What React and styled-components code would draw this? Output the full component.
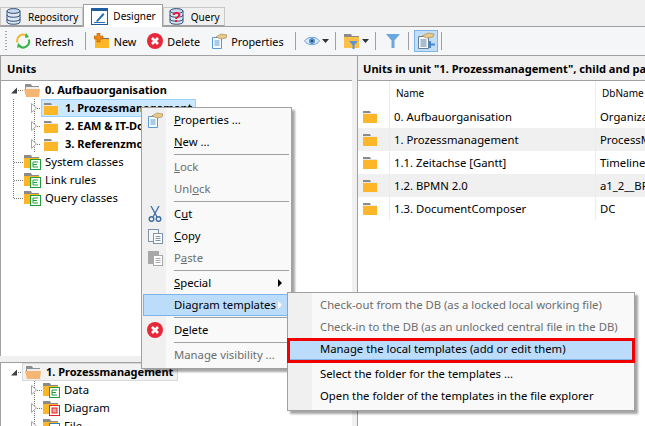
import { createGlobalStyle, styled } from "styled-components"

const GlobalStyle = createGlobalStyle`
  html, body {
    margin: 0;
    padding: 0;
    background: #f0f0f0;
  }
  * {
    box-sizing: border-box;
  }
  svg {
    flex-shrink: 0;
  }
`

const Closed = () => <>
  <path d="M0 2h7l1 2h6v2H0z" fill="#8a8a8a" />
  <rect x="0" y="5" width="14" height="9" fill="#fdb627" />
  <rect x="0" y="4" width="14" height="1" fill="#e8e8e8" />
</>

const FolderIcon = () => <svg width="15" height="15" viewBox="0 0 15 15"><Closed /></svg>

const OpenFolderIcon = () => <svg width="17" height="15" viewBox="0 0 17 15">
  <path d="M1 1h6l1 2h7v3H1z" fill="#8f8f8f" />
  <path d="M2 4h13v2H2z" fill="#eeeeee" />
  <path d="M0 6h16l-1 8H2z" fill="#f6b673" />
</svg>

const BadgeFolderIcon = ({ color = "#1f9d3a", kind = "list" }) => <svg width="17" height="16" viewBox="0 0 17 16">
  <path d="M0 1h7l1 2h7v2H0z" fill="#8a8a8a" />
  <rect x="0" y="4" width="15" height="10" fill="#fdb627" />
  <rect x="6.5" y="5.5" width="10" height="10" fill="#fff" stroke={color} />
  {kind === "list" && <path d="M9 8h5M9 10.5h4M9 13h5M9 8v5" stroke={color} fill="none" />}
  {kind === "box" && <rect x="9" y="8" width="5" height="5" fill="#f3a0a0" stroke={color} />}
</svg>

const OpenArrow = () => <svg width="7" height="7" viewBox="0 0 7 7"><path d="M6 0.5v6H0z" fill="#404040" /></svg>

const ClosedArrow = () => <svg width="6" height="10" viewBox="0 0 6 10"><path d="M0.5 0.5l5 4.5-5 4.5z" fill="#fff" stroke="#a6a6a6" /></svg>

const DbIcon = ({ mark }) => <svg width="15" height="17" viewBox="0 0 15 17">
  <path d="M1 3v11c0 3 13 3 13 0V3z" fill="#dfe8f2" stroke="#2f4f7a" />
  <ellipse cx="7.5" cy="3" rx="6.5" ry="2.4" fill="#c8d8ea" stroke="#2f4f7a" />
  <path d="M1 7c0 3 13 3 13 0M1 11c0 3 13 3 13 0" fill="none" stroke="#2f4f7a" />
  {mark && <text x="7.5" y="14" textAnchor="middle" fontFamily="Liberation Sans" fontWeight="700" fontSize="15" fill="#e3173e">?</text>}
</svg>

const DesignerIcon = () => <svg width="17" height="17" viewBox="0 0 17 17">
  <rect x="0.5" y="0.5" width="16" height="16" fill="#fff" stroke="#1f5f9e" />
  <rect x="1" y="1" width="15" height="2" fill="#1f5f9e" />
  <path d="M5 13L12 5l1.500 1.500-7 7.500z" fill="#1f6fb5" />
  <path d="M3 14.500h11" stroke="#1f6fb5" />
</svg>

const RefreshIcon = () => <svg width="16" height="16" viewBox="0 0 16 16">
  <path d="M2.500 9.500A6 6 0 0 1 12 3" fill="none" stroke="#f2b632" strokeWidth="2" />
  <path d="M13.800 6.500A6 6 0 0 1 4.200 13" fill="none" stroke="#38b24a" strokeWidth="2" />
  <path d="M11 0l3 4-4 1zM2 15l1-5 3.500 3z" fill="#38b24a" />
</svg>

const NewIcon = () => <svg width="16" height="16" viewBox="0 0 16 16">
  <path d="M1 3h6l1 2h7v2H1z" fill="#6f6f6f" />
  <rect x="1" y="6" width="14" height="9" fill="#fdb627" />
  <path d="M3 0h3v3h3v3H6v3H3V6H0V3h3z" fill="#ef8a17" stroke="#a64d00" strokeWidth="0.5" />
</svg>

const DeleteIcon = () => <svg width="16" height="16" viewBox="0 0 16 16">
  <circle cx="8" cy="8" r="8" fill="#e5283a" />
  <path d="M5 5l6 6M11 5l-6 6" stroke="#fff" strokeWidth="2.6" />
</svg>

const PropertiesIcon = ({ muted }) => <svg width="16" height="16" viewBox="0 0 16 16">
  <path d="M1.500 4.500h9v11h-9z" fill="#f5fafe" stroke={muted ? "#8aa4bb" : "#5b9bd5"} />
  <path d="M3.500 8h5M3.500 10h5M3.500 12h5" stroke={muted ? "#8aa4bb" : "#5b9bd5"} />
  <path d="M5 4l5-3 6 1-1 3-5 1z" fill="#e8c98a" stroke="#9c8350" strokeWidth="0.6" />
</svg>

const ActivePropertiesIcon = () => <svg width="18" height="18" viewBox="0 0 18 18">
  <path d="M1.500 4.500h10v12h-10z" fill="#f5fafe" stroke="#5f7f9c" />
  <path d="M3.500 8h6M3.500 10h6M3.500 12h6M3.500 14h6" stroke="#5f7f9c" />
  <path d="M5 4l6-3 6 1-1 3-6 1z" fill="#e8c98a" stroke="#9c8350" strokeWidth="0.6" />
  <path d="M13 9v7M13 12.500h5" stroke="#3f87cf" strokeWidth="2" />
</svg>

const EyeIcon = () => <svg width="16" height="12" viewBox="0 0 16 12">
  <path d="M0.500 6C4 1 12 1 15.500 6 12 11 4 11 0.500 6z" fill="#dbe9f8" stroke="#6ea4dc" />
  <circle cx="8" cy="6" r="3" fill="#5b94d3" />
  <circle cx="8" cy="6" r="1.300" fill="#24517f" />
</svg>

const FolderFilterIcon = () => <svg width="16" height="16" viewBox="0 0 16 16">
  <path d="M0 1h7l1 2h7v2H0z" fill="#8a8a8a" />
  <rect x="0" y="4" width="15" height="11" fill="#fdc04a" />
  <path d="M5 8h9l-3.500 4v4h-2v-4z" fill="#5b94d3" />
</svg>

const FunnelIcon = () => <svg width="14" height="14" viewBox="0 0 14 14"><path d="M0 0h14L8.500 6.500V14h-3V6.500z" fill="#6ba6de" /></svg>

const CaretDown = () => <svg width="7" height="4" viewBox="0 0 7 4"><path d="M0 0h7L3.500 4z" fill="#333" /></svg>

const ScissorsIcon = () => <svg width="14" height="16" viewBox="0 0 14 16">
  <path d="M3 0l6 11M11 0L5 11" stroke="#3c6ea5" strokeWidth="1.300" fill="none" />
  <circle cx="3.500" cy="13" r="2.300" fill="none" stroke="#3c6ea5" strokeWidth="1.400" />
  <circle cx="10.500" cy="13" r="2.300" fill="none" stroke="#3c6ea5" strokeWidth="1.400" />
</svg>

const ClipboardIcon = ({ color = "#7f93a8", fill = "#f7f7f7" }) => <svg width="15" height="16" viewBox="0 0 15 16">
  <rect x="0.500" y="1.500" width="10" height="12" fill={fill} stroke={color} />
  <rect x="5.500" y="5.500" width="9" height="10" fill="#fff" stroke={color} />
  <path d="M7.500 8.500h5M7.500 10.500h5M7.500 12.500h5" stroke={color} />
</svg>

const menuIcons = {
  properties: <PropertiesIcon />,
  cut: <ScissorsIcon />,
  copy: <ClipboardIcon />,
  paste: <ClipboardIcon color="#a8a8a8" fill="#a8a8a8" />,
  delete: <DeleteIcon />,
}

const unitRows = [
  ["0. Aufbauorganisation", "Organization"],
  ["1. Prozessmanagement", "ProcessManagement"],
  ["1.1. Zeitachse [Gantt]", "Timeline"],
  ["1.2. BPMN 2.0", "a1_2__BPMN"],
  ["1.3. DocumentComposer", "DC"],
]

const mainMenu = [
  { label: "Properties ...", hot: 0, icon: "properties" },
  { label: "New ...", hot: 0 },
  { sep: true },
  { label: "Lock", hot: 0, disabled: true },
  { label: "Unlock", hot: 3, disabled: true },
  { sep: true },
  { label: "Cut", hot: 1, icon: "cut" },
  { label: "Copy", hot: 0, icon: "copy" },
  { label: "Paste", hot: 1, disabled: true, icon: "paste" },
  { sep: true },
  { label: "Special", hot: 0, arrow: true },
  { label: "Diagram templates", active: true, arrow: true },
  { sep: true },
  { label: "Delete", hot: 1, icon: "delete" },
  { sep: true },
  { label: "Manage visibility ...", disabled: true },
]

const subMenu = [
  { label: "Check-out from the DB (as a locked local working file)", disabled: true },
  { label: "Check-in to the DB (as an unlocked central file in the DB)", disabled: true },
  { label: "Manage the local templates (add or edit them)", active: true },
  { sep: true },
  { label: "Select the folder for the templates ..." },
  { label: "Open the folder of the templates in the file explorer" },
]

const MenuLabel = ({ label, hot }) => hot === undefined ? label : <>
  {label.slice(0, hot)}<u>{label[hot]}</u>{label.slice(hot + 1)}
</>

const Menu = ({ items, Box }) => <Box>
  {items.map((item, i) => item.sep
    ? <MenuSep key={i} />
    : <MenuItem key={i} $active={item.active} $disabled={item.disabled}>
      <MenuIcon>{menuIcons[item.icon]}</MenuIcon>
      <MenuText><MenuLabel label={item.label} hot={item.hot} /></MenuText>
      {item.arrow && <MenuArrow $active={item.active} />}
    </MenuItem>)}
</Box>

const App = () => {
  return <Window>
    <GlobalStyle />
    <Tabs>
      <Tab><DbIcon />Repository</Tab>
      <Tab $active><DesignerIcon />Designer</Tab>
      <Tab><DbIcon mark />Query</Tab>
    </Tabs>
    <Toolbar>
      <Grip />
      <ToolButton><RefreshIcon />Refresh</ToolButton>
      <ToolSep />
      <ToolButton><NewIcon />New</ToolButton>
      <ToolButton><DeleteIcon />Delete</ToolButton>
      <ToolButton><PropertiesIcon />Properties</ToolButton>
      <ToolSep />
      <DropButton><EyeIcon /><CaretDown /></DropButton>
      <ToolSep />
      <DropButton><FolderFilterIcon /><CaretDown /></DropButton>
      <ToolSep />
      <FunnelButton><FunnelIcon /></FunnelButton>
      <ToolSep />
      <ActiveTool><ActivePropertiesIcon /></ActiveTool>
      <ToolSep />
    </Toolbar>
    <Main>
      <LeftColumn>
        <LeftPanel>
          <PanelHeader>Units</PanelHeader>
          <Tree>
            <TreeRow>
              <RootToggle><OpenArrow /></RootToggle>
              <Dash $width={6} />
              <OpenFolderIcon />
              <RootLabel>0. Aufbauorganisation</RootLabel>
            </TreeRow>
            {["1. Prozessmanagement", "2. EAM & IT-Dokumentation", "3. Referenzmodelle"].map((name, i) =>
              <TreeRow key={name}>
                <Guide />
                <ChildToggle><ClosedArrow /></ChildToggle>
                <Dash $width={4} />
                <ChildLabel $selected={i === 0}>
                  <FolderIcon />
                  <BoldName>{name}</BoldName>
                </ChildLabel>
              </TreeRow>)}
            {["System classes", "Link rules", "Query classes"].map((name, i) =>
              <TreeRow key={name}>
                <Guide $last={i === 2} />
                <Dash $width={10} />
                <BadgeFolderIcon />
                <ClassLabel>{name}</ClassLabel>
              </TreeRow>)}
          </Tree>
        </LeftPanel>
        <BottomTree>
          <TreeRow>
            <RootToggle><OpenArrow /></RootToggle>
            <Dash $width={4} />
            <SelectedRoot>
              <OpenFolderIcon />
              <BoldName>1. Prozessmanagement</BoldName>
            </SelectedRoot>
          </TreeRow>
          {[["Data", "#1f9d3a", "list"], ["Diagram", "#e3222c", "box"], ["File", "#2f7fc4", "none"]].map(([name, color, kind]) =>
            <TreeRow key={name}>
              <ChildToggle $bottom><ClosedArrow /></ChildToggle>
              <Dash $width={6} />
              <BadgeFolderIcon color={color} kind={kind} />
              <ClassLabel>{name}</ClassLabel>
            </TreeRow>)}
        </BottomTree>
      </LeftColumn>
      <RightPanel>
        <RightHeader>Units in unit "1. Prozessmanagement", child and parent units</RightHeader>
        <Grid>
          <GridHead>
            <Cell $w={32} />
            <HeadCell $w={206}>Name</HeadCell>
            <HeadCell $w={120}>DbName</HeadCell>
          </GridHead>
          {unitRows.map(([name, db], i) => <GridRow key={name} $alt={i % 2 === 1}>
            <IconCell><FolderIcon /></IconCell>
            <Cell $w={206}>{name}</Cell>
            <Cell $w={120}>{db}</Cell>
          </GridRow>)}
        </Grid>
      </RightPanel>
    </Main>
    <Menu items={mainMenu} Box={MainMenuBox} />
    <Menu items={subMenu} Box={SubMenuBox} />
    <RedBox />
  </Window>
}

export default App

const Window = styled.div`
  position: relative;
  display: flex;
  flex-direction: column;
  width: 645px;
  height: 426px;
  overflow: hidden;
  background: #f0f0f0;
  color: #000;
  font-family: "Noto Sans", "Liberation Sans", sans-serif;
  font-size: 11.3px;
`

const Tabs = styled.div`
  display: flex;
  align-items: flex-end;
  height: 27px;
  flex-shrink: 0;
  font-size: 10px;
  border-bottom: 1px solid #a0a0a0;
`

const Tab = styled.div`
  gap: ${({ $active }) => $active ? "5px" : "7px"};
  display: flex;
  align-items: center;
  height: ${({ $active }) => $active ? "23px" : "19px"};
  margin-bottom: ${({ $active }) => $active ? "-1px" : "0"};
  padding: 0 ${({ $active }) => $active ? "6px 0 7px" : "4px 0 5px"};
  border: 1px solid ${({ $active }) => $active ? "#a0a0a0" : "#c8c8c8"};
  border-bottom: ${({ $active }) => $active ? "none" : "1px solid #a0a0a0"};
  background: ${({ $active }) => $active ? "#fff" : "#f0f0f0"};
`

const Toolbar = styled.div`
  display: flex;
  align-items: center;
  height: 29px;
  flex-shrink: 0;
  padding-left: 5px;
  font-size: 10.8px;
  border-bottom: 1px solid #a0a0a0;
  background: #f5f6f7;
`

const Grip = styled.div`
  width: 2px;
  height: 20px;
  margin-right: 5px;
  background: repeating-linear-gradient(to bottom, #a8a8a8 0 1px, transparent 1px 3px);
`

const ToolButton = styled.div`
  gap: 4px;
  display: flex;
  align-items: center;
  height: 22px;
  padding: 0 3px;
  margin-right: 5px;
`

const DropButton = styled(ToolButton)`
  gap: 2px;
  margin-right: 0;
`

const FunnelButton = styled(ToolButton)`
  padding: 0 5px;
  margin-right: 0;
`

const ActiveTool = styled.div`
  display: flex;
  align-items: center;
  justify-content: center;
  width: 24px;
  height: 22px;
  border: 1px solid #7eb4ea;
  background: #c3def5;
`

const ToolSep = styled.div`
  width: 1px;
  height: 18px;
  margin: 0 5px 0 3px;
  background: #a0a0a0;
`

const Main = styled.div`
  display: flex;
  flex: 1;
  min-height: 0;
`

const LeftColumn = styled.div`
  gap: 6px;
  display: flex;
  flex-direction: column;
  width: 352px;
  flex-shrink: 0;
`

const LeftPanel = styled.div`
  display: flex;
  flex-direction: column;
  height: 300px;
  border-left: 1px solid #a0a0a0;
  background: #fff;
`

const PanelHeader = styled.div`
  display: flex;
  align-items: center;
  height: 25px;
  flex-shrink: 0;
  padding-left: 6px;
  white-space: nowrap;
  overflow: hidden;
  font-size: 11.1px;
  font-weight: 700;
  border-bottom: 1px solid #a0a0a0;
  background: #f0f0f0;
`

const RightHeader = styled(PanelHeader)`
  padding-left: 5px;
`

const Tree = styled.div`
  display: flex;
  flex-direction: column;
  flex: 1;
`

const BottomTree = styled(Tree)`
  border-left: 1px solid #a0a0a0;
  border-top: 1px solid #a0a0a0;
  background: #fff;
  min-height: 0;
`

const TreeRow = styled.div`
  display: flex;
  align-items: center;
  height: 18px;
  flex-shrink: 0;
  white-space: nowrap;
`

const RootToggle = styled.div`
  display: flex;
  margin-left: 10px;
`

const Guide = styled.div`
  align-self: flex-start;
  width: 1px;
  height: ${({ $last }) => $last ? "9px" : "18px"};
  margin-left: 12px;
  background: repeating-linear-gradient(to bottom, #777 0 1px, transparent 1px 2px);
`

const ChildToggle = styled.div`
  display: flex;
  align-items: center;
  justify-content: center;
  align-self: stretch;
  width: 6px;
  margin-left: ${({ $bottom }) => $bottom ? "30px" : "17px"};
  background: repeating-linear-gradient(to bottom, #777 0 1px, transparent 1px 2px) center / 1px 100% no-repeat;
`

const Dash = styled.div`
  width: ${({ $width }) => $width}px;
  height: 1px;
  background: repeating-linear-gradient(to right, #777 0 1px, transparent 1px 2px);
`

const BoldName = styled.b`
  margin-bottom: 2px;
  font-size: 11px;
`

const RootLabel = styled(BoldName)`
  margin-left: 4px;
`

const ClassLabel = styled.span`
  margin-left: 4px;
  margin-bottom: 2px;
`

const ChildLabel = styled.div`
  gap: 6px;
  display: flex;
  align-items: center;
  width: 155px;
  height: 18px;
  padding-left: 2px;
  border: 1px solid ${({ $selected }) => $selected ? "#99d1ff" : "transparent"};
  background: ${({ $selected }) => $selected ? "#cce8ff" : "transparent"};
`

const SelectedRoot = styled.div`
  gap: 4px;
  display: flex;
  align-items: center;
  width: 156px;
  height: 18px;
  padding-left: 2px;
  border: 1px solid #d9d9d9;
  background: #f2f2f2;
`

const RightPanel = styled.div`
  display: flex;
  flex-direction: column;
  flex: 1;
  min-width: 0;
  margin-left: 5px;
  border-left: 1px solid #a0a0a0;
  background: #fff;
`

const Grid = styled.div`
  display: flex;
  flex-direction: column;
  flex: 1;
`

const GridHead = styled.div`
  display: flex;
  height: 24px;
  flex-shrink: 0;
  font-size: 10px;
`

const GridRow = styled.div`
  display: flex;
  height: 23px;
  flex-shrink: 0;
  background: ${({ $alt }) => $alt ? "#f0f0f0" : "#fff"};
`

const Cell = styled.div`
  display: flex;
  align-items: center;
  width: ${({ $w }) => $w}px;
  flex-shrink: 0;
  padding-left: 4px;
  overflow: hidden;
  white-space: nowrap;
  border-right: 1px solid #e4eef8;
`

const HeadCell = styled(Cell)`
  padding-left: 6px;
`

const IconCell = styled(Cell)`
  width: 32px;
  padding-left: 5px;
`

const MenuBox = styled.div`
  position: absolute;
  display: flex;
  flex-direction: column;
  padding: 1px;
  border: 1px solid #a0a0a0;
  background: linear-gradient(to right, #f0f0f0 24px, #f9f9f9 24px);
  box-shadow: 3px 3px 2px rgba(0, 0, 0, 0.35);
`

const MainMenuBox = styled(MenuBox)`
  left: 141px;
  top: 107px;
  width: 151px;
  height: 262px;
`

const SubMenuBox = styled(MenuBox)`
  left: 287px;
  top: 292px;
  width: 348px;
  height: 119px;
`

const MenuItem = styled.div`
  display: flex;
  align-items: center;
  height: 22px;
  flex-shrink: 0;
  white-space: nowrap;
  color: ${({ $disabled }) => $disabled ? "#6d6d6d" : "#000"};
  background: ${({ $active }) => $active ? "#bbdcfb" : "transparent"};
  outline: ${({ $active }) => $active ? "1px solid #7eb4ea" : "none"};
  outline-offset: -1px;
`

const MenuIcon = styled.div`
  display: flex;
  align-items: center;
  justify-content: center;
  width: 24px;
  margin-right: 7px;
`

const MenuText = styled.span`
  margin-bottom: 2px;
`

const MenuArrow = styled.div`
  width: 0;
  height: 0;
  margin-left: auto;
  margin-right: 8px;
  border-left: 4px solid ${({ $active }) => $active ? "#fff" : "#000"};
  border-top: 4px solid transparent;
  border-bottom: 4px solid transparent;
`

const MenuSep = styled.div`
  height: 1px;
  margin: 1px 1px 1px 31px;
  background: #a0a0a0;
`

const RedBox = styled.div`
  position: absolute;
  left: 287px;
  top: 338px;
  width: 348px;
  height: 25px;
  border: 3px solid #f00000;
`
